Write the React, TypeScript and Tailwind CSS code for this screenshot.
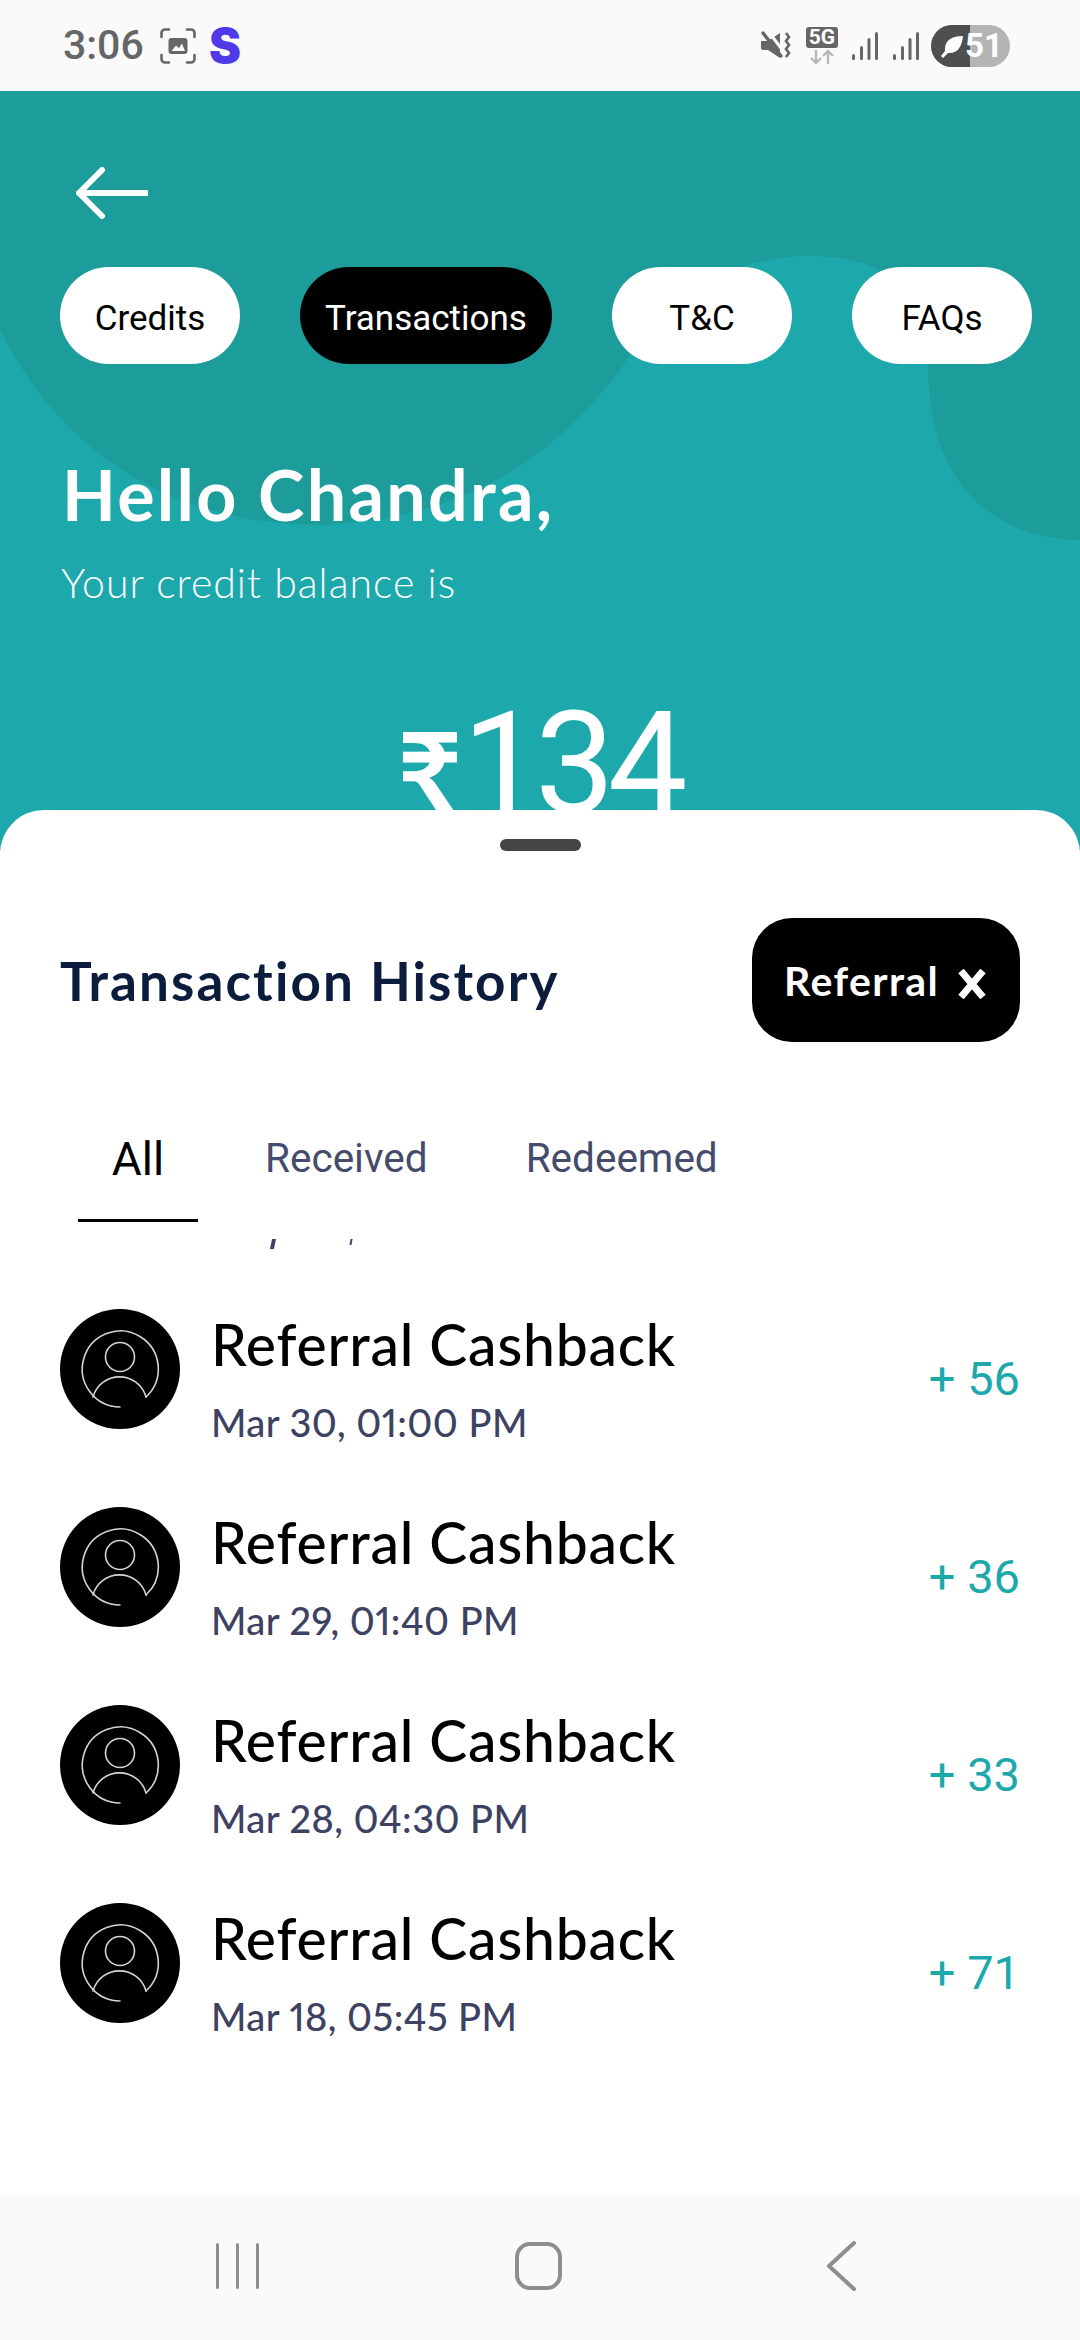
const heading = "font-['Lato','Open_Sans',sans-serif]";
const roboto = "font-['Roboto',sans-serif]";

const rows = [
  { date: "Mar 30, 01:00 PM", amount: "+ 56" },
  { date: "Mar 29, 01:40 PM", amount: "+ 36" },
  { date: "Mar 28, 04:30 PM", amount: "+ 33" },
  { date: "Mar 18, 05:45 PM", amount: "+ 71" },
];

function Avatar() {
  return (
    <div className="w-[120px] h-[120px] rounded-full bg-black shrink-0">
      <svg width="120" height="120" viewBox="0 0 120 120" fill="none" stroke="#d4d4d4" strokeWidth="1.6" strokeLinecap="round">
        <path d="M60 98 A38 38 0 1 1 86 88" />
        <circle cx="60" cy="48" r="14.5" />
        <path d="M33 88 A27.5 27.5 0 0 1 86 88" />
      </svg>
    </div>
  );
}

function StatusBar() {
  return (
    <div className="h-[91px] bg-[#fafafa] flex items-center justify-between pl-[63px] pr-[70px] shrink-0">
      <div className="flex items-center">
        <span className={`${roboto} font-medium text-[41px] leading-none text-[#666666] w-[97px]`}>3:06</span>
        <svg width="36" height="36" viewBox="0 0 36 36" fill="none" className="mr-[13px]">
          <path d="M1.5 9 V5 A3.5 3.5 0 0 1 5 1.5 H9 M27 1.5 H31 A3.5 3.5 0 0 1 34.5 5 V9 M34.5 27 V31 A3.5 3.5 0 0 1 31 34.5 H27 M9 34.5 H5 A3.5 3.5 0 0 1 1.5 31 V27" stroke="#666" strokeWidth="2.6" strokeLinecap="round" />
          <rect x="8.5" y="10" width="19" height="16" rx="3" fill="#666" />
          <path d="M11.5 23 L16 17.5 L19 20 L22 15.5 L25 23 Z" fill="#fafafa" />
        </svg>
        <span className="font-['Inter',sans-serif] font-black text-[48px] leading-none text-[#4f39e8]">S</span>
      </div>
      <div className="flex items-center">
        <svg width="32" height="32" viewBox="0 0 32 32" fill="none" className="mr-[14px]">
          <path d="M1 11 H8 L20 3 V28 L8 20 H3 A2 2 0 0 1 1 18 Z" fill="#666" />
          <path d="M8 1 L24 22" stroke="#fafafa" strokeWidth="3" />
          <path d="M3 3 L21 26" stroke="#666" strokeWidth="3.4" strokeLinecap="round" />
          <path d="M26 3 L29 7 L26 11 L29 15 L26 19 L29 23 L26 27" stroke="#666" strokeWidth="2.6" />
        </svg>
        <div className="w-[32px] h-[38px] mr-[13px]">
          <div className={`${roboto} h-[21px] rounded-[3px] bg-[#666] text-white font-bold text-[21px] leading-[21px] text-center`}>5G</div>
          <svg width="32" height="16" viewBox="0 0 32 16" fill="none" stroke="#b8b8b8" strokeWidth="2.4" className="mt-[1px]">
            <path d="M10 1 V14 M5 9 L10 14 L15 9 M22 15 V2 M17 7 L22 2 L27 7" />
          </svg>
        </div>
        <svg width="68" height="30" viewBox="0 0 68 30" fill="#666" className="mr-[12px]">
          <rect x="1" y="23" width="3" height="6" rx="1.5" />
          <rect x="9" y="15" width="3" height="14" rx="1.5" />
          <rect x="16.5" y="7" width="3" height="22" rx="1.5" />
          <rect x="24" y="1" width="3" height="28" rx="1.5" />
          <rect x="42" y="23" width="3" height="6" rx="1.5" />
          <rect x="50" y="15" width="3" height="14" rx="1.5" />
          <rect x="57.5" y="7" width="3" height="22" rx="1.5" />
          <rect x="65" y="1" width="3" height="28" rx="1.5" />
        </svg>
        <div className="relative w-[79px] h-[42px] rounded-full bg-[#b5b5b5] overflow-hidden">
          <div className="absolute left-0 top-0 bottom-0 w-[39px] bg-[#4f4f4f]" />
          <svg width="24" height="24" viewBox="0 0 24 24" className="absolute left-[9px] top-[10px]" fill="#fff">
            <path d="M23 1 C12 1 5 5 5 14 L5 16 L1 21 L3 23 L8 18 C17 19 22 12 23 1 Z" />
          </svg>
          <span className={`${roboto} absolute left-[34px] top-0 font-bold text-[33px] leading-[42px] text-white`}>51</span>
        </div>
      </div>
    </div>
  );
}

function Header() {
  const pills = [
    { label: "Credits", w: "w-[180px]", active: false },
    { label: "Transactions", w: "w-[252px]", active: true },
    { label: "T&C", w: "w-[180px]", active: false },
    { label: "FAQs", w: "w-[180px]", active: false },
  ];
  return (
    <div className="relative h-[759px] bg-[#1da9ab] overflow-hidden shrink-0">
      <svg className="absolute left-0 top-0" width="1080" height="759" viewBox="0 91 1080 759">
        <path
          d="M0 91 H1080 V540 C1000 540 940 490 930 400 C925 340 930 300 895 280 C860 250 780 250 735 270 C690 290 660 310 620 370 C560 450 470 520 320 525 C170 525 60 450 0 330 Z"
          fill="#1d9c9c"
        />
      </svg>
      <div className="relative pt-[76px]">
        <svg width="72" height="52" viewBox="0 0 72 52" fill="none" stroke="#fff" strokeWidth="6" strokeLinecap="round" strokeLinejoin="round" className="ml-[76px]">
          <path d="M3 26 H70 M26 3 L3 26 L26 49" />
        </svg>
        <div className="flex justify-between pl-[60px] pr-[48px] mt-[48px]">
          {pills.map((p) => (
            <div
              key={p.label}
              className={`${p.w} h-[97px] rounded-full flex items-center justify-center pt-[8px] ${roboto} text-[35px] ${p.active ? "bg-black text-white" : "bg-white text-black"}`}
            >
              {p.label}
            </div>
          ))}
        </div>
        <div className={`${heading} font-bold text-white text-[70px] tracking-[2.3px] leading-[80px] ml-[62px] mt-[90px]`}>Hello Chandra,</div>
        <div className={`${heading} font-light text-white text-[41px] tracking-[1px] leading-[50px] ml-[61px] mt-[24px]`}>Your credit balance is</div>
        <div className="text-white leading-[150px] h-[150px] flex items-baseline justify-center mt-[82px] pr-[2px]">
          <span className={`${heading} text-[112px] font-bold`}>₹</span>
          <span className={`${roboto} text-[142px] font-normal tracking-[-7px]`}>134</span>
        </div>
      </div>
    </div>
  );
}

export default function App() {
  return (
    <div className="w-[1080px] h-[2340px] flex flex-col bg-white overflow-hidden">
      <StatusBar />
      <Header />
      <div className="relative -mt-[40px] flex-1 bg-white rounded-t-[44px] flex flex-col">
        <div className="w-[81px] h-[12px] rounded-full bg-[#444444] mx-auto mt-[29px] shrink-0" />
        <div className="flex items-center justify-between pl-[60px] pr-[60px] mt-[67px]">
          <h1 className={`${heading} font-bold text-[53px] tracking-[2.1px] leading-none text-[#0b1c3d]`}>Transaction History</h1>
          <div className="w-[268px] h-[124px] rounded-[40px] bg-black flex items-center pl-[32px] gap-[18px]">
            <span className={`${heading} font-bold text-[41px] tracking-[1.4px] leading-none text-white`}>Referral</span>
            <svg width="30" height="30" viewBox="0 0 30 30" stroke="#fff" strokeWidth="7" className="mt-[8px]">
              <path d="M4 2 L26 28 M26 2 L4 28" />
            </svg>
          </div>
        </div>
        <div className={`flex items-start mt-[90px] ${roboto}`}>
          <div className="ml-[78px] w-[120px] h-[90px] border-b-[3px] border-black text-center text-[46px] leading-[54px] text-black">All</div>
          <div className="ml-[67px] text-[40.5px] leading-[52px] text-[#454b6b]">Received</div>
          <div className="ml-[98px] text-[40.5px] leading-[52px] text-[#454b6b]">Redeemed</div>
        </div>
        <div className="relative mt-[87px] flex flex-col gap-[78px]">
          <div className="absolute left-[271px] -top-[70px] w-[4px] h-[10px] bg-[#3d4262] -skew-x-12" />
          <div className="absolute left-[350px] -top-[70px] w-[2px] h-[6px] bg-[#3d4262] -skew-x-12" />
          {rows.map((r) => (
            <div key={r.date} className="flex items-center h-[120px] pl-[60px] pr-[60px]">
              <Avatar />
              <div className={`${heading} ml-[31px] flex-1 pt-[18px]`}>
                <div className="text-[57px] leading-[66px] tracking-[0.8px] font-medium text-black">Referral Cashback</div>
                <div className="text-[38px] leading-[46px] tracking-[0.45px] font-medium proportional-nums text-[#3d4262] mt-[22px]">{r.date}</div>
              </div>
              <div className={`${roboto} text-[47px] text-[#1da9ab] pt-[20px]`}>{r.amount}</div>
            </div>
          ))}
        </div>
      </div>
      <div className="h-[144px] bg-[#fafafa] relative shrink-0 flex items-start">
        <div className="ml-[216px] mt-[47px] flex gap-[17px]">
          <div className="w-[3px] h-[46px] bg-[#8e8e8e] rounded-full" />
          <div className="w-[3px] h-[46px] bg-[#8e8e8e] rounded-full" />
          <div className="w-[3px] h-[46px] bg-[#8e8e8e] rounded-full" />
        </div>
        <div className="ml-[256px] mt-[46px] w-[47px] h-[48px] rounded-[15px] border-[4px] border-[#8e8e8e]" />
        <svg width="32" height="50" viewBox="0 0 32 50" fill="none" stroke="#8e8e8e" strokeWidth="4" strokeLinecap="round" strokeLinejoin="round" className="ml-[264px] mt-[45px]">
          <path d="M28 2 L3 25 L28 48" />
        </svg>
      </div>
    </div>
  );
}
